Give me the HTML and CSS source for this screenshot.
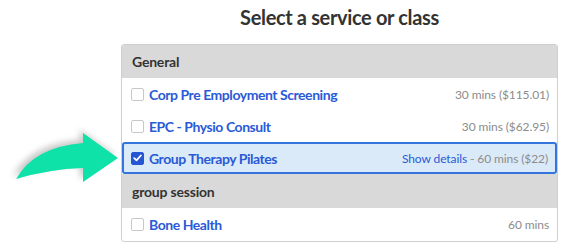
FILE: index.html
```html
<!DOCTYPE html>
<html>
<head>
    <title>Select a service or class</title>
    <link rel="stylesheet" href="styles.css">
</head>
<body>
    <div class="page">
        <h1>Select a service or class</h1>

        <div class="services">
            <div class="group">General</div>
            <label class="item">
                <span class="box"></span>
                <span class="name">Corp Pre Employment Screening</span>
                <span class="meta">30 mins ($115.01)</span>
            </label>
            <label class="item">
                <span class="box"></span>
                <span class="name">EPC - Physio Consult</span>
                <span class="meta">30 mins ($62.95)</span>
            </label>
            <label class="item selected">
                <span class="box checked">
                    <svg width="9" height="8" viewBox="0 0 9 8"><path d="M1.2 4.2 L3.5 6.3 L7.8 1.5" fill="none" stroke="#fff" stroke-width="1.8" stroke-linecap="round" stroke-linejoin="round"/></svg>
                </span>
                <span class="name">Group Therapy Pilates</span>
                <span class="meta"><a href="#" class="details">Show details</a> - 60 mins ($22)</span>
            </label>
            <div class="group tall">group session</div>
            <label class="item">
                <span class="box"></span>
                <span class="name">Bone Health</span>
                <span class="meta">60 mins</span>
            </label>
        </div>

        <!-- annotation arrow pointing at the selected row -->
        <svg class="arrow" width="125" height="65" viewBox="0 0 125 65">
            <path d="M16 54 Q34 22 83 18 L83 8 L118 33 L83 57 L83 43 Q50 44 16 54 Z" fill="#0fe2a8"/>
        </svg>
    </div>
</body>
</html>
```

FILE: styles.css
```css
body { margin: 0; font-family: Lato, "Open Sans", sans-serif; background: #fff; }
.page { position: relative; padding: 0 18px 0 121px; }

h1 { margin: 0; padding: 5px 0 0; height: 44px; box-sizing: border-box; text-align: center; font-size: 20px; font-weight: 700; letter-spacing: -0.35px; color: #333; }

.services { border: 1px solid #cfcfcf; border-radius: 3px; overflow: hidden; }
.group { height: 33px; display: flex; align-items: center; padding: 0 10px; background: #d9d9d9; color: #333; font-size: 14px; font-weight: 700; letter-spacing: -0.2px; }
.group.tall { height: 34px; }

.item { height: 32px; display: flex; align-items: center; padding: 0 8px 0 9px; box-sizing: border-box; }
.item:last-child { height: 33px; }
.item.selected { background: #dbeaf8; border: 2px solid #3474dc; border-radius: 3px; padding: 0 7px 0 7px; }

.box { width: 13px; height: 13px; box-sizing: border-box; border: 1px solid #c8c8c8; border-radius: 2px; background: #fff; margin-right: 5px; display: flex; align-items: center; justify-content: center; }
.box.checked { background: #2656d3; border-color: #2656d3; }

.name { flex: 1; color: #2a5ad6; font-size: 14px; font-weight: 700; letter-spacing: -0.45px; }
.meta { color: #8c8c8c; font-size: 12px; letter-spacing: -0.1px; }
.details { color: #2a5ad6; text-decoration: none; }

.arrow { position: absolute; left: 0; top: 125px; filter: drop-shadow(-3px -3px 3px rgba(0, 0, 0, 0.22)); }
```
